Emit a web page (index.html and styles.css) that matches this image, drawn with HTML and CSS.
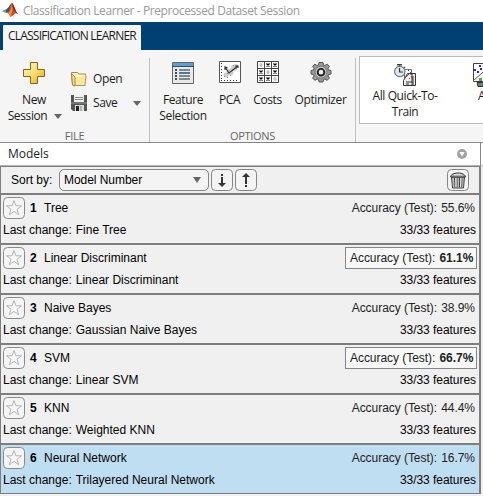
FILE: index.html
```html
<!DOCTYPE html>
<html lang="en">
<head>
<meta charset="utf-8">
<title>Classification Learner</title>
<link rel="stylesheet" href="styles.css">
</head>
<body>
<svg class="defs" aria-hidden="true">
  <symbol id="star" viewBox="0 0 22 22"><rect x=".5" y=".5" width="21" height="21" rx="4" fill="#f5f5f5" stroke="#8a8a8a"/><path d="M11 3.500l1.900 5.300h5.600l-4.500 3.400 1.700 5.600-4.700-3.400-4.700 3.400L8 12.200 3.500 8.800h5.600z" fill="#f8f8f8" stroke="#b4b4b4"/></symbol>
</svg>
<header class="titlebar">
  <svg width="16" height="14" viewBox="0 0 16 14"><path d="M0 8l4.500-2 2 1.800L4 10z" fill="#4d9bd1"/><path d="M4.500 6C7 5 8 1 10 0L7 9l-3 1z" fill="#26577f"/><path d="M10 0c2 1 3 8 6 11-2-1-3-1-4 .5C10.500 13 9 13.500 8 14c0-2-1.500-4-3-4 3-2 3-8 5-10z" fill="#d44b1d"/><path d="M10 0c-.5 4-1 8-4 10 1 .4 2 2 2 4 2-3 3-8 2-14z" fill="#f39436"/><path d="M10 0c2 1 3 8 6 11-3-2-5-4-6-11z" fill="#8f1b13"/></svg>
  <span>Classification Learner - Preprocessed Dataset Session</span>
</header>
<nav class="tabs"><div class="tab"><span>CLASSIFICATION LEARNER</span></div></nav>
<section class="ribbon">
  <div class="group file">
    <div class="tools">
      <div class="tool new">
        <svg width="22" height="22" viewBox="0 0 22 22"><defs><linearGradient id="gold" x1="0" y1="0" x2="1" y2="1"><stop offset="0" stop-color="#fff9c8"/><stop offset=".5" stop-color="#f8df72"/><stop offset="1" stop-color="#e3a800"/></linearGradient></defs><path d="M7.500.5h7v7h7v7h-7v7h-7v-7h-7v-7h7z" fill="url(#gold)" stroke="#90621c"/></svg>
        <span>New</span><span class="with-arrow">Session<i class="arrow"></i></span>
      </div>
      <div class="stack">
        <div class="line"><svg width="16" height="16" viewBox="0 0 16 16"><path d="M.5 3V1.500h6l1 1.500h7V14H1.500z" fill="#fff7c8" stroke="#a98543"/><path d="M4 6h6l1-1.500h4V14H4z" fill="#fbe9a0"/><path d="M.5 2.500L4 6v9L1.500 14z" fill="#f4dc94" stroke="#a98543"/><path d="M4 14.500h10l1-10" fill="none" stroke="#b8934a"/></svg><span>Open</span></div>
        <div class="line"><svg width="16" height="16" viewBox="0 0 16 16"><path d="M0 0h16v16H2l-2-2z" fill="#555"/><path d="M3 0h10v7H3z" fill="#f2f2f2"/><path d="M4 2.500h8M4 4.500h8" stroke="#888"/><path d="M0 8h16" stroke="#999"/><path d="M4 10h9v6H4z" fill="#ddd"/><path d="M5 11h3v5H5z" fill="#222"/><path d="M10 11v5" stroke="#888"/></svg><span>Save</span><i class="arrow"></i></div>
      </div>
    </div>
    <div class="caption">FILE</div>
  </div>
  <div class="group options">
    <div class="tools">
      <div class="tool feature">
        <svg width="22" height="22" viewBox="0 0 22 22"><path d="M.5.5h21v21H.5z" fill="#e9eae8" stroke="#666"/><path d="M1 1h20v3H1z" fill="#5d9fce"/><path d="M0 4.500h22" stroke="#294f70"/><path d="M3 8h2M3 11h2M3 14h2M3 17h2" stroke="#111" stroke-width="1.500"/><path d="M7 8h11M7 14h11M7 17h11" stroke="#222" stroke-width="1.200"/><path d="M7 11h11" stroke="#145380" stroke-width="1.500"/></svg>
        <span>Feature</span><span>Selection</span>
      </div>
      <div class="tool pca">
        <svg width="22" height="22" viewBox="0 0 22 22"><path d="M.5.5h21v21H.5z" fill="#fff" stroke="#555"/><path d="M2.500 2v18M2 19.500h18" stroke="#333" stroke-dasharray="1 2"/><g fill="#ccc"><circle cx="7" cy="14" r="2.500"/><circle cx="11" cy="11" r="3.500"/><circle cx="15" cy="7" r="3"/><circle cx="17" cy="5" r="2"/></g><g fill="#888"><path d="M5 15h1v1H5zM8 12h1v1H8zM11 14h1v1h-1zM13 9h1v1h-1zM17 7h1v1h-1zM14 4h1v1h-1zM8 16h1v1H8z"/></g><path d="M6 6l4 6L19 5M6 9V6l2.500 1M16 5h3v2" fill="none" stroke="#333" stroke-width="1.200"/></svg>
        <span>PCA</span>
      </div>
      <div class="tool costs">
        <svg width="22" height="22" viewBox="0 0 22 22"><path d="M.5.5h21v21H.5zM7.500 0v22M14.500 0v22M0 7.500h22M0 14.500h22" fill="#fff" stroke="#444"/><path d="M9.500 2.500l3 3m0-3l-3 3M16.500 2.500l3 3m0-3l-3 3M2.500 9.500l3 3m0-3l-3 3M16.500 9.500l3 3m0-3l-3 3M2.500 16.500l3 3m0-3l-3 3M9.500 16.500l3 3m0-3l-3 3" stroke="#000" stroke-width="1.300"/><g fill="none" stroke="#aaa"><ellipse cx="4" cy="4" rx="1" ry="1.500"/><ellipse cx="11" cy="11" rx="1" ry="1.500"/><ellipse cx="18" cy="18" rx="1" ry="1.500"/></g></svg>
        <span>Costs</span>
      </div>
      <div class="tool optimizer">
        <svg width="22" height="22" viewBox="0 0 22 22"><path d="M9 1.500h4l.5 2.500 1.500.6 2.200-1.500 2.200 2.300L18 7.500l.6 1.500 2.400.5v3.500l-2.400.5-.6 1.500 1.400 2.100-2.300 2.300-2.100-1.400-1.500.6-.5 2.400H9l-.5-2.400-1.500-.6-2.100 1.400-2.300-2.300L4 15l-.6-1.500-2.400-.5V9.500L3.400 9 4 7.500 2.600 5.400l2.300-2.300L7 4.600 8.500 4z" fill="#999" stroke="#555"/><circle cx="11" cy="11.200" r="6" fill="#c4c4c4" stroke="#777"/><circle cx="11" cy="11.200" r="3.300" fill="#eee" stroke="#222" stroke-width="1.900"/></svg>
        <span>Optimizer</span>
      </div>
    </div>
    <div class="caption">OPTIONS</div>
  </div>
  <div class="gallery">
    <div class="tool quick">
      <svg width="22" height="22" viewBox="0 0 22 22"><path d="M10.500 5.500h7v10h-7z" fill="#fff" stroke="#777"/><path d="M13.500 9.500h8v12h-12v-5z" fill="#eee" stroke="#333"/><path d="M10 15l8-8" stroke="#555"/><path d="M16 10h2v11M19 12v9M12 18h6M12 20h3" stroke="#333" fill="none"/><path d="M17 12h1v2h-1zM15 14h1v1h-1z" fill="#e02020"/><path d="M14 6h1v1h-1z" fill="#22f"/><path d="M3 .7h5M5.500 1v2M10 3l1 1" stroke="#444" stroke-width="1.400"/><circle cx="5.800" cy="7.500" r="5.200" fill="#dceaf2" stroke="#777" stroke-width="1.200"/><path d="M5.500 4v4H9" fill="none" stroke="#334" stroke-width="1.200"/></svg>
      <span>All Quick-To-</span><span>Train</span>
    </div>
    <div class="tool all">
      <svg width="22" height="24" viewBox="0 0 22 24"><path d="M.5.5h20v18H.5z" fill="#fff" stroke="#444"/><path d="M0 18L18 2" stroke="#555"/><path d="M6 2h2v2H6zM1 6h2v2H1zM4 8h2v2H4zM7 5h2v2H7z" fill="#22f"/><path d="M6 15h3v3H6z" fill="#3b3"/><path d="M4 19.500h12v4H5z" fill="#777" stroke="#333"/></svg>
      <span>A</span>
    </div>
  </div>
</section>
<main class="workspace">
  <section class="panel">
    <header class="panel-head"><span>Models</span><svg width="10" height="10" viewBox="0 0 10 10"><circle cx="5" cy="5" r="5" fill="#a3a3a3"/><path d="M2.300 3h5.400L5 7.500z" fill="#fff"/></svg></header>
    <div class="list">
      <div class="sort">
        <label>Sort by:</label>
        <div class="select"><span>Model Number</span><i class="arrow"></i></div>
        <svg class="btn" width="22" height="22" viewBox="0 0 22 22"><rect x=".5" y=".5" width="21" height="21" rx="4" fill="#f4f4f4" stroke="#858585"/><path d="M10 5h2v2h-2zM10 8h2v6h3l-4 4-4-4h3z" fill="#333"/></svg>
        <svg class="btn" width="22" height="22" viewBox="0 0 22 22"><rect x=".5" y=".5" width="21" height="21" rx="4" fill="#f4f4f4" stroke="#858585"/><path d="M10 16h2v2h-2zM10 15h2V8h3l-4-4-4 4h3z" fill="#333"/></svg>
        <svg class="btn trash" width="22" height="22" viewBox="0 0 22 22"><rect x=".5" y=".5" width="21" height="21" rx="4" fill="#f4f4f4" stroke="#858585"/><path d="M4.500 8h13l-1 11h-11z" fill="#bbb" stroke="#444"/><path d="M7.500 9l.5 9M10 9v9M12.500 9v9M15 9l-.5 9" stroke="#444"/><path d="M9 9v9M14 9l-.3 9" stroke="#eee"/><path d="M3.500 8c0-2 3-4 7.500-4s7.500 2 7.500 4z" fill="#aaa" stroke="#333"/><path d="M7 6c3-1 6-1 8 0" stroke="#eee" fill="none"/></svg>
      </div>
      <article class="row"><div class="top"><svg class="star"><use href="#star"/></svg><b>1</b><span>Tree</span><div class="score">Accuracy (Test): <em>55.6%</em></div></div><div class="sub"><span>Last change:</span><span>Fine Tree</span><span class="features">33/33 features</span></div></article>
      <article class="row"><div class="top"><svg class="star"><use href="#star"/></svg><b>2</b><span>Linear Discriminant</span><div class="score best">Accuracy (Test): <em>61.1%</em></div></div><div class="sub"><span>Last change:</span><span>Linear Discriminant</span><span class="features">33/33 features</span></div></article>
      <article class="row"><div class="top"><svg class="star"><use href="#star"/></svg><b>3</b><span>Naive Bayes</span><div class="score">Accuracy (Test): <em>38.9%</em></div></div><div class="sub"><span>Last change:</span><span>Gaussian Naive Bayes</span><span class="features">33/33 features</span></div></article>
      <article class="row"><div class="top"><svg class="star"><use href="#star"/></svg><b>4</b><span>SVM</span><div class="score best">Accuracy (Test): <em>66.7%</em></div></div><div class="sub"><span>Last change:</span><span>Linear SVM</span><span class="features">33/33 features</span></div></article>
      <article class="row"><div class="top"><svg class="star"><use href="#star"/></svg><b>5</b><span>KNN</span><div class="score">Accuracy (Test): <em>44.4%</em></div></div><div class="sub"><span>Last change:</span><span>Weighted KNN</span><span class="features">33/33 features</span></div></article>
      <article class="row selected"><div class="top"><svg class="star"><use href="#star"/></svg><b>6</b><span>Neural Network</span><div class="score">Accuracy (Test): <em>16.7%</em></div></div><div class="sub"><span>Last change:</span><span>Trilayered Neural Network</span><span class="features">33/33 features</span></div></article>
    </div>
  </section>
  <aside class="next"></aside>
</main>
</body>
</html>
```
FILE: styles.css
```css
* { box-sizing: border-box; }
body { margin: 0; width: 483px; height: 496px; overflow: hidden; background: #f0f0f0; color: #1c1c1c; font: 12px/16px "Open Sans", "Noto Sans", sans-serif; }
svg { display: block; flex: none; }
.defs { width: 0; height: 0; position: absolute; }
.titlebar { height: 22px; background: #fff; display: flex; align-items: center; gap: 5px; padding-left: 2px; color: #999; letter-spacing: -.4px; white-space: nowrap; }
.titlebar svg { margin-top: -3px; }
.tabs { height: 28px; background: #004073; padding: 3px 0 0 3px; }
.tab { width: 138px; height: 25px; background: #f5f5f5; padding: 3px 0 0 5px; border-radius: 1px 1px 0 0; letter-spacing: -.78px; white-space: nowrap; }
.ribbon { height: 93px; background: #f5f5f5; border-bottom: 1px solid #858585; display: flex; padding-top: 6px; overflow: hidden; }
.group { border-right: 1px solid #c0c0c0; margin-top: 2px; flex: none; display: flex; flex-direction: column; height: 84px; }
.file { width: 150px; }
.options { width: 206px; }
.tools { display: flex; height: 70px; }
.caption { font-size: 11px; line-height: 14px; height: 14px; padding-top: 1px; text-align: center; color: #666; letter-spacing: -.3px; }
.tool { display: flex; flex-direction: column; align-items: center; flex: none; padding-top: 4px; letter-spacing: -.38px; white-space: nowrap; }
.tool svg { margin-bottom: 8px; }
.arrow { width: 0; height: 0; border: 4px solid transparent; border-top: 5px solid #666; border-bottom: 0; flex: none; }
.new { width: 68px; }
.with-arrow { display: flex; align-items: center; gap: 7px; margin-left: 2px; }
.stack { padding: 13px 0 0 3px; display: flex; flex-direction: column; gap: 8px; letter-spacing: -.38px; }
.line { display: flex; align-items: center; gap: 6px; height: 16px; width: 70px; }
.line .arrow { margin-left: auto; }
.feature { width: 66px; }
.pca, .costs, .optimizer { padding-top: 3px; }
.pca svg, .costs svg, .optimizer svg { margin-bottom: 9px; }
.pca { width: 27px; }
.costs { width: 49px; }
.optimizer { width: 57px; }
.gallery { flex: none; margin-left: 3px; width: 160px; height: 68px; background: #fff; border: 1px solid #bbb; display: flex; }
.quick { width: 90px; padding-top: 7px; }
.quick svg { margin-bottom: 2px; }
.all { margin-left: 23px; padding-top: 6px; align-items: flex-start; }
.all svg { margin-bottom: 1px; }
.all span { margin-left: 5px; }
.workspace { display: flex; height: 353px; }
.panel { width: 481px; flex: none; }
.panel-head { height: 23px; background: #fff; border-right: 1px solid #858585; border-bottom: 1px solid #b8b8b8; display: flex; align-items: center; justify-content: space-between; padding: 0 13px 0 8px; }
.next { width: 2px; height: 23px; background: #fff; border-bottom: 1px solid #b8b8b8; }
.list { border: 1px solid #7e7e7e; border-right-width: 2px; font: 12px/16px "Liberation Sans", Arial, sans-serif; color: #000; background: #f0f0f0; }
.sort { height: 26px; display: flex; align-items: center; padding-left: 10px; }
.sort label { width: 48px; white-space: nowrap; }
.select { width: 150px; height: 22px; border: 1px solid #858585; border-radius: 5px; background: #f4f4f4; display: flex; align-items: center; justify-content: space-between; padding: 0 7px 0 4px; letter-spacing: -.05px; }
.select .arrow { border-width: 6px 4px 0; }
.btn { margin-left: 2px; }
.btn.trash { margin-left: auto; margin-right: 10px; }
.row { height: 50px; border-top: 2px solid #7e7e7e; padding: 2px 2px 0; white-space: nowrap; }
.row.selected { background: #c0def2; }
.top { height: 22px; display: flex; align-items: center; }
.star { width: 22px; height: 22px; }
.top b { margin-left: 5px; width: 14px; }
.score { margin-left: auto; margin-right: 2px; color: #222; letter-spacing: -.05px; }
.score em { font-style: normal; margin-left: 1px; }
.score.best { width: 132px; height: 22px; margin-right: 0; border: 1px solid #858585; background: #f8f8f8; padding: 2px 0 2px 4px; }
.best em { font-weight: bold; }
.sub { display: flex; gap: 4px; padding-top: 3px; }
.features { margin-left: auto; margin-right: 1px; letter-spacing: -.05px; }
```
